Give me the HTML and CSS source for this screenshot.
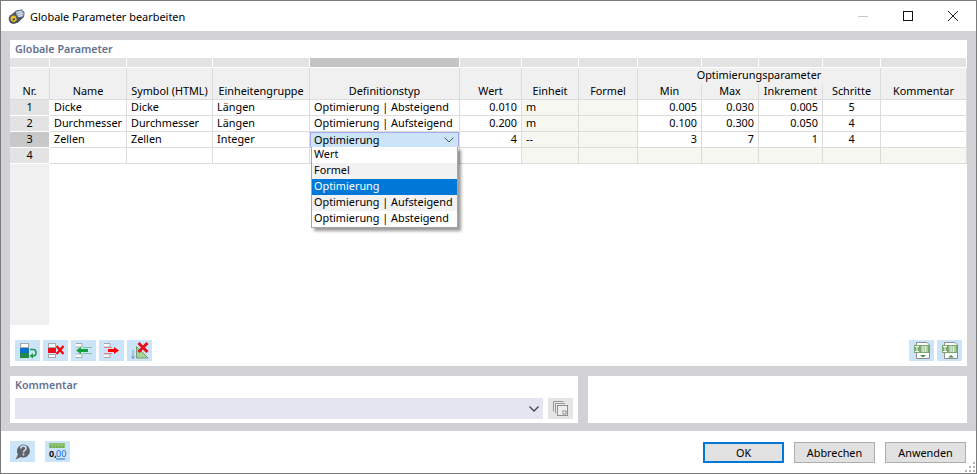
FILE: index.html
```html
<!DOCTYPE html>
<html lang="de">
<head>
<meta charset="utf-8">
<title>Globale Parameter bearbeiten</title>
<link rel="stylesheet" href="styles.css">
</head>
<body>
<div class="window">
  <header class="titlebar">
    <svg class="app-icon" viewBox="0 0 17 17" width="17" height="17">
      <path d="M2 8 8 2.500 14 1.500 16.500 4.500 16 9 9.500 15 4 15.500Z" fill="#48566e"/>
      <path d="M7.500 3.500 13.800 2.200 15.800 5 15.200 8.500 9 9.500Z" fill="#a6b4c8"/>
      <path d="M9.500 4.500 13.500 3.500M10 6.500 14.500 5.500M10.500 8.500 14.500 7.500" stroke="#e4eaf2" stroke-width="1"/>
      <circle cx="5.500" cy="11" r="4.800" fill="#4a5364"/>
      <path d="M7.500 9A2.500 2.500 0 1 0 8 11.500 2 2 0 0 0 4 11.500" fill="none" stroke="#f0c020" stroke-width="1.500"/>
    </svg>
    <span class="title-text">Globale Parameter bearbeiten</span>
    <div class="window-controls">
      <svg viewBox="0 0 10 10" width="10" height="10"><path d="M0 5.500H10" stroke="#c8c8c8"/></svg>
      <svg viewBox="0 0 10 10" width="10" height="10"><rect x=".5" y=".5" width="9" height="9" fill="none" stroke="#111"/></svg>
      <svg viewBox="0 0 10 10" width="10" height="10"><path d="M0 0 10 10M10 0 0 10" stroke="#222" stroke-width="1"/></svg>
    </div>
  </header>

  <main class="content">
    <section class="panel panel-main">
      <h2 class="panel-title">Globale Parameter</h2>
      <div class="grid-area">
        <table class="grid">
          <colgroup><col class="c-nr"><col class="c-name"><col class="c-sym"><col class="c-grp"><col class="c-def"><col class="c-val"><col class="c-unit"><col class="c-form"><col class="c-min"><col class="c-max"><col class="c-inc"><col class="c-step"><col class="c-com"></colgroup>
          <thead>
            <tr class="strip">
              <th></th><th></th><th></th><th></th><th class="strip-active"></th><th></th><th></th><th></th><th></th><th></th><th></th><th></th><th></th>
            </tr>
            <tr class="head-top">
              <th rowspan="2" class="head-main">Nr.</th>
              <th rowspan="2" class="head-main">Name</th>
              <th rowspan="2" class="head-main">Symbol (HTML)</th>
              <th rowspan="2" class="head-main">Einheitengruppe</th>
              <th rowspan="2" class="head-main">Definitionstyp</th>
              <th rowspan="2" class="head-main">Wert</th>
              <th rowspan="2" class="head-main">Einheit</th>
              <th rowspan="2" class="head-main">Formel</th>
              <th colspan="4" class="head-group">Optimierungsparameter</th>
              <th rowspan="2" class="head-main">Kommentar</th>
            </tr>
            <tr class="head-sub">
              <th>Min</th><th>Max</th><th>Inkrement</th><th>Schritte</th>
            </tr>
          </thead>
          <tbody>
            <tr>
              <th class="nr">1</th><td>Dicke</td><td>Dicke</td><td>Längen</td><td>Optimierung | Absteigend</td><td class="num">0.010</td><td class="ro">m</td><td class="ro"></td><td class="num">0.005</td><td class="num">0.030</td><td class="num">0.005</td><td class="ctr">5</td><td></td>
            </tr>
            <tr>
              <th class="nr">2</th><td>Durchmesser</td><td>Durchmesser</td><td>Längen</td><td>Optimierung | Aufsteigend</td><td class="num">0.200</td><td class="ro">m</td><td class="ro"></td><td class="num">0.100</td><td class="num">0.300</td><td class="num">0.050</td><td class="ctr">4</td><td></td>
            </tr>
            <tr>
              <th class="nr nr-active">3</th><td>Zellen</td><td>Zellen</td><td>Integer</td>
              <td class="editing">
                <div class="combo-cell">
                  <span>Optimierung</span>
                  <svg viewBox="0 0 10 6" width="10" height="6"><path d="M.5 .5 5 5 9.500 .5" fill="none" stroke="#555"/></svg>
                </div>
                <ul class="dropdown">
                  <li>Wert</li>
                  <li class="alt">Formel</li>
                  <li class="selected">Optimierung</li>
                  <li class="alt">Optimierung | Aufsteigend</li>
                  <li>Optimierung | Absteigend</li>
                </ul>
              </td>
              <td class="num">4</td><td class="ro">--</td><td class="ro"></td><td class="num">3</td><td class="num">7</td><td class="num">1</td><td class="ctr">4</td><td></td>
            </tr>
            <tr>
              <th class="nr">4</th><td></td><td></td><td></td><td></td><td></td><td class="ro"></td><td class="ro"></td><td class="ro"></td><td class="ro"></td><td class="ro"></td><td class="ro"></td><td class="ro"></td>
            </tr>
          </tbody>
        </table>
        <div class="gutter"></div>
      </div>
      <div class="toolbar">
        <div class="tool-group">
          <button class="tool" type="button" aria-label="Einfügen">
            <svg viewBox="0 0 25 21" width="25" height="21"><rect x="5.500" y="3.500" width="8" height="4" fill="#fff" stroke="#a8a8a8"/><rect x="5" y="8" width="9" height="5" fill="#0a70c8"/><rect x="5" y="13" width="9" height="5" fill="#1f8a4c"/><path d="M15 9.500H18.500Q21 9.500 21 12.500 21 16 18 16H16" fill="none" stroke="#1f9a4c" stroke-width="1.600"/><path d="M18 13 14.500 16 18 18.500Z" fill="#1f9a4c"/></svg>
          </button>
          <button class="tool" type="button" aria-label="Löschen">
            <svg viewBox="0 0 25 21" width="25" height="21"><rect x="5.500" y="3.500" width="7" height="4" fill="#fff" stroke="#a8a8a8"/><rect x="5" y="8" width="8" height="5" fill="#e8101c"/><rect x="5.500" y="14.500" width="7" height="3" fill="#fff" stroke="#a8a8a8"/><path d="M13.500 6 20.500 14M20.500 6 13.500 14" stroke="#f00" stroke-width="2.200"/></svg>
          </button>
          <button class="tool" type="button" aria-label="Nach links">
            <svg viewBox="0 0 25 21" width="25" height="21"><path d="M5 3.500H11V7H5M5 14H11V17.500H5" fill="#fff" stroke="#a8a8a8"/><path d="M12 7.500H21M12 13.500H21" stroke="#7cc49a"/><path d="M5 10.500 10 7V9H17V12H10V14Z" fill="#12a13f"/></svg>
          </button>
          <button class="tool" type="button" aria-label="Nach rechts">
            <svg viewBox="0 0 25 21" width="25" height="21"><path d="M5 3.500H11V7H5M5 14H11V17.500H5" fill="#fff" stroke="#a8a8a8"/><path d="M5 7.500H13M5 13.500H13" stroke="#e98080"/><path d="M20 10.500 15 7V9H9V12H15V14Z" fill="#f00"/></svg>
          </button>
          <button class="tool" type="button" aria-label="Optimierung löschen">
            <svg viewBox="0 0 25 21" width="25" height="21"><path d="M9.500 18V6.500L21 18Z" fill="#a8d398" stroke="#6f9f6a"/><path d="M6 10V18M4.500 16 6 19 7.500 16" fill="none" stroke="#7a9cd0"/><path d="M11.500 3 20.500 12M20.500 3 11.500 12" stroke="#e8101c" stroke-width="3"/></svg>
          </button>
        </div>
        <div class="tool-group">
          <button class="tool" type="button" aria-label="Import">
            <svg viewBox="0 0 25 21" width="25" height="21"><path d="M7.500 2.500H18L20.500 5V18.500H7.500Z" fill="#fff" stroke="#8d8d8d"/><rect x="5" y="5" width="15" height="8" fill="#7ba86e"/><path d="M6 6.500H10M6 11.500H10M8 6.500V11.500" stroke="#fff"/><path d="M12 7H19M12 9H19M12 11H19M14 6V12M16.500 6V12" stroke="#e3f0dc"/><path d="M11 15H17L14 17.500Z" fill="#4c8a44"/></svg>
          </button>
          <button class="tool" type="button" aria-label="Export">
            <svg viewBox="0 0 25 21" width="25" height="21"><path d="M7.500 2.500H18L20.500 5V18.500H7.500Z" fill="#fff" stroke="#8d8d8d"/><rect x="5" y="5" width="15" height="8" fill="#7ba86e"/><path d="M6 6.500H10M6 11.500H10M8 6.500V11.500" stroke="#fff"/><path d="M12 7H19M12 9H19M12 11H19M14 6V12M16.500 6V12" stroke="#e3f0dc"/><path d="M11 17.500H17L14 15Z" fill="#4c8a44"/></svg>
          </button>
        </div>
      </div>
    </section>

    <div class="lower">
      <section class="panel panel-comment">
        <h2 class="panel-title">Kommentar</h2>
        <div class="comment-row">
          <div class="comment-combo">
            <svg viewBox="0 0 10 6" width="10" height="6"><path d="M.5 .5 5 5 9.500 .5" fill="none" stroke="#444" stroke-width="1.300"/></svg>
          </div>
          <button class="comment-btn" type="button" aria-label="Kommentare">
            <svg viewBox="0 0 17 17" width="17" height="17"><path d="M1.500 11.500V1.500H11.500M3.500 13V3.500H13" fill="none" stroke="#9a9a9a"/><rect x="5.500" y="5.500" width="10" height="10" fill="#eee" stroke="#8f8f8f"/><rect x="11" y="11" width="3" height="3" fill="#fff" stroke="#8f8f8f"/></svg>
          </button>
        </div>
      </section>
      <section class="panel panel-side"></section>
    </div>
  </main>

  <footer class="footer">
    <div class="footer-tools">
      <button class="tool" type="button" aria-label="Hilfe">
        <svg viewBox="0 0 25 21" width="25" height="21"><path d="M5.500 18.500 8 13.500A6.500 6.500 0 1 1 11 16Z" fill="#5f6166"/><path d="M10.500 7.500Q11 5 13.500 5 16 5 16 7.300 16 8.800 14.500 9.600 13.500 10.100 13.500 11.500M13.500 12.500V14.500" fill="none" stroke="#cce4f7" stroke-width="1.600"/></svg>
      </button>
      <button class="tool" type="button" aria-label="Zahlenformat">
        <svg viewBox="0 0 25 21" width="25" height="21"><rect x="4" y="2" width="16" height="5" fill="#8cc26d"/><path d="M6 5V7M9 5V7M12 5V7M15 5V7M18 5V7" stroke="#5f9a48"/><text x="4" y="16" class="fmt-a">0,</text><text x="11" y="16" class="fmt-b">00</text><path d="M11 18H20" stroke="#2a6fd0"/></svg>
      </button>
    </div>
    <div class="footer-buttons">
      <button class="btn btn-default" type="button">OK</button>
      <button class="btn" type="button">Abbrechen</button>
      <button class="btn" type="button">Anwenden</button>
    </div>
    <svg class="grip" viewBox="0 0 11 11" width="11" height="11"><path d="M8 0h2v2H8zM4 4h2v2H4zM8 4h2v2H8zM0 8h2v2H0zM4 8h2v2H4zM8 8h2v2H8z" fill="#b5b5b5"/></svg>
  </footer>
</div>
</body>
</html>
```

FILE: styles.css
```css
* { box-sizing: border-box; }
html, body { margin: 0; padding: 0; }
body {
  width: 977px;
  height: 474px;
  overflow: hidden;
  font-family: "Noto Sans", "Liberation Sans", sans-serif;
  font-size: 10.85px;
  color: #000;
}
.window {
  width: 977px;
  height: 474px;
  border: 1px solid #7a7a7a;
  display: flex;
  flex-direction: column;
  background: #fff;
}
.titlebar {
  height: 30px;
  flex: none;
  display: flex;
  align-items: center;
  padding-left: 7px;
  background: #fff;
}
.app-icon { margin-right: 5px; }
.title-text { font-size: 10.95px; }
.window-controls {
  margin-left: auto;
  display: flex;
  gap: 35px;
  padding-right: 18px;
}
.window-controls svg { display: block; }
.content {
  flex: none;
  height: 400px;
  background: #d2d2d6;
  padding: 9px 9px 8px;
  display: flex;
  flex-direction: column;
  gap: 10px;
}
.panel { background: #fff; }
.panel-main {
  height: 326px;
  display: flex;
  flex-direction: column;
}
.panel-title {
  margin: 0;
  height: 18px;
  padding: 1px 0 0 5px;
  font-size: 10.7px;
  line-height: 16px;
  font-weight: 600;
  color: #62708f;
}
.grid-area {
  height: 267px;
  display: flex;
  flex-direction: column;
  flex: none;
}
.grid {
  table-layout: fixed;
  width: 957px;
  border-collapse: separate;
  border-spacing: 0;
  flex: none;
}
.c-nr { width: 40px; }
.c-name { width: 77px; }
.c-sym { width: 86px; }
.c-grp { width: 97px; }
.c-def { width: 150px; }
.c-val { width: 62px; }
.c-unit { width: 57px; }
.c-form { width: 59px; }
.c-min { width: 64px; }
.c-max { width: 57px; }
.c-inc { width: 64px; }
.c-step { width: 58px; }
.c-com { width: 86px; }
.grid th, .grid td {
  padding: 0;
  font-weight: 400;
  white-space: nowrap;
  overflow: visible;
  line-height: 14px;
  height: 16px;
  vertical-align: top;
}
.strip th {
  height: 10px;
  line-height: 0;
  background: #e3e3e3;
  border-right: 1px solid #fff;
  border-bottom: 1px solid #fff;
}
.strip .strip-active { background: #c4c4c4; }
.head-top th, .head-sub th {
  background: #f0f0f0;
  border-right: 1px solid #dcdcdc;
  text-align: center;
}
.grid .head-main {
  vertical-align: bottom;
  border-bottom: 1px solid #dcdcdc;
  padding-bottom: 1px;
}
.head-sub th { border-bottom: 1px solid #dcdcdc; }
.grid tbody td {
  border-right: 1px solid #dcdcdc;
  border-bottom: 1px solid #dcdcdc;
  padding: 0 4px;
}
.grid tbody th.nr {
  background: #e3e3e3;
  border-right: 1px solid #fff;
  border-bottom: 1px solid #fff;
  text-align: center;
}
.grid tbody th.nr-active { background: #c8c8c8; }
.grid tbody td.num { text-align: right; padding-right: 4px; }
.grid tbody td.ctr { text-align: center; }
.grid tbody td.ro { background: #f7f7f1; }
.grid tbody td.editing {
  position: relative;
  padding: 0;
}
.combo-cell {
  height: 15px;
  display: flex;
  align-items: center;
  justify-content: space-between;
  padding: 0 4px 0 3px;
  background: #cce4f7;
  border: 1px solid #a9a9ef;
  border-bottom: 0;
}
.dropdown {
  position: absolute;
  z-index: 5;
  left: 1px;
  top: 15px;
  width: 147px;
  margin: 0;
  padding: 0;
  list-style: none;
  background: #fff;
  border: 1px solid #a5a5a5;
  border-top: 0;
  box-shadow: 3px 3px 3px rgba(0, 0, 0, .4);
}
.dropdown li {
  height: 16px;
  line-height: 14px;
  padding-left: 2px;
}
.dropdown .alt { background: #f2f2f2; }
.dropdown .selected { background: #0078d7; color: #fff; }
.gutter {
  width: 39px;
  flex: 1;
  background: #f0f0f0;
}
.toolbar {
  display: flex;
  justify-content: space-between;
  padding: 15px 5px 0;
}
.tool-group { display: flex; gap: 3px; }
.tool {
  width: 25px;
  height: 21px;
  padding: 0;
  border: 0;
  background: #cce4f7;
  display: block;
}
.tool svg { display: block; }
.lower {
  display: flex;
  gap: 10px;
  height: 47px;
  flex: none;
}
.panel-comment { width: 568px; }
.panel-side { flex: 1; }
.panel-comment .panel-title { height: 22px; padding-top: 1px; }
.comment-row {
  display: flex;
  gap: 5px;
  padding-left: 5px;
}
.comment-combo {
  width: 528px;
  height: 21px;
  background: #e4e5f0;
  display: flex;
  align-items: center;
  justify-content: flex-end;
  padding-right: 4px;
}
.comment-btn {
  width: 25px;
  height: 21px;
  padding: 0 0 0 4px;
  border: 0;
  background: #e5e5e5;
  display: flex;
  align-items: center;
}
.footer {
  flex: 1;
  position: relative;
  display: flex;
  justify-content: space-between;
  padding: 10px 10px 0 9px;
}
.footer-tools { display: flex; gap: 10px; }
.footer-buttons { display: flex; gap: 10px; padding-top: 1px; }
.btn {
  width: 81px;
  height: 21px;
  padding: 0;
  font: inherit;
  color: #000;
  background: #e1e1e1;
  border: 1px solid #adadad;
}
.btn-default { border: 2px solid #0078d7; }
.fmt-a { font: 700 9px "Noto Sans", sans-serif; fill: #111; }
.fmt-b { font: 400 9px "Noto Sans", sans-serif; fill: #2a6fd0; }
.grip {
  position: absolute;
  right: 0;
  bottom: 0;
}
```
